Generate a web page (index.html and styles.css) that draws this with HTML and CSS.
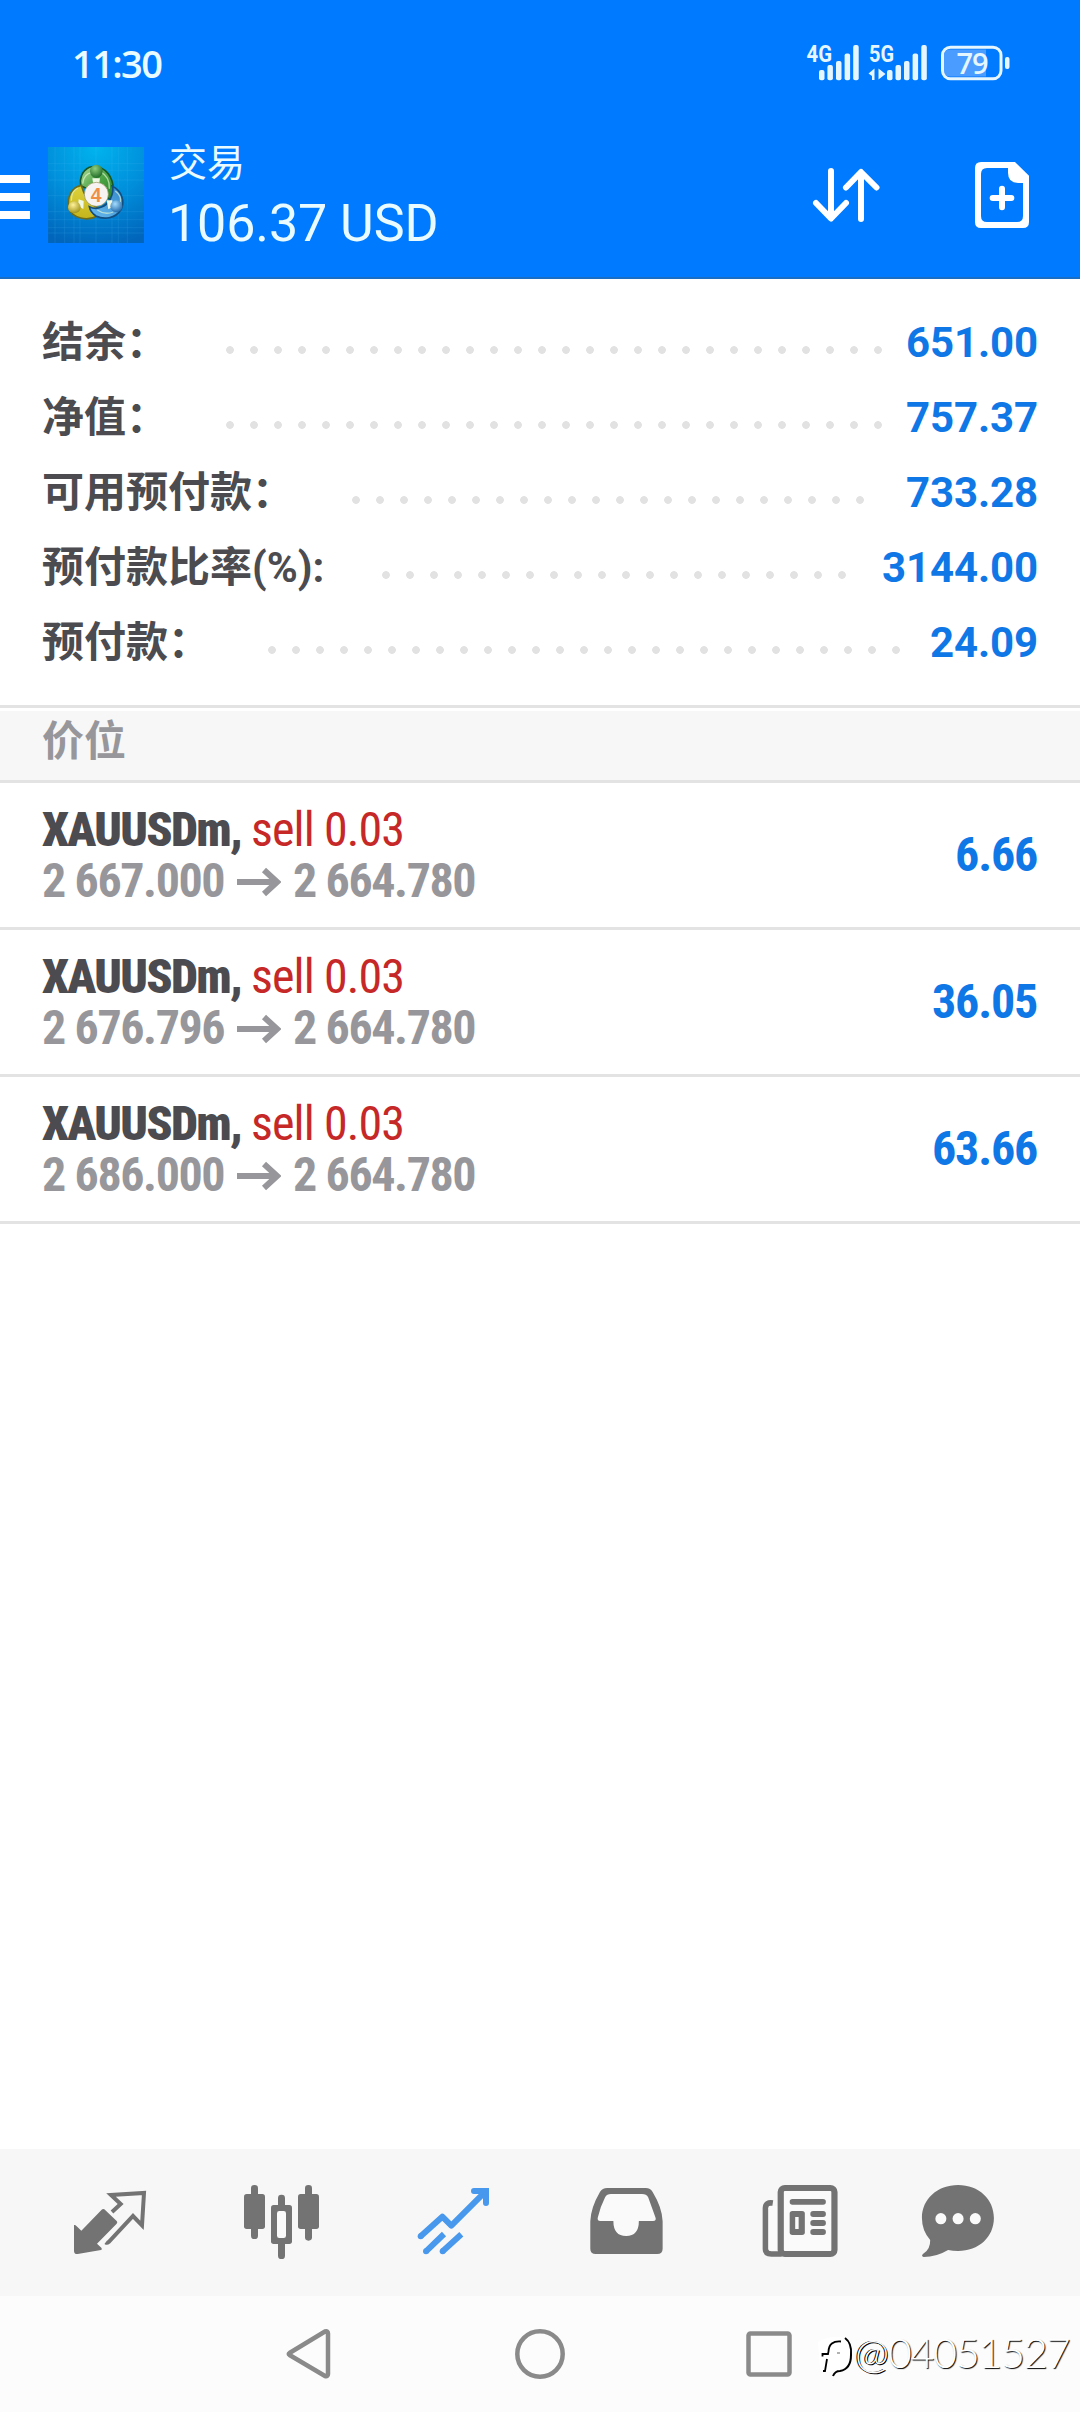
FILE: index.html
```
<!DOCTYPE html>
<html lang="zh-CN">
<head>
<meta charset="utf-8">
<title>交易</title>
<link rel="stylesheet" href="styles.css">
</head>
<body>
<div class="screen">
  <header class="top">
    <div class="status">
      <span class="clock">11:30</span>
      <svg class="status-icons" width="210" height="44" viewBox="801 41 210 44">
        <g fill="#e6f6ff">
          <text x="806.5" y="62" font-size="23" textLength="25.5" lengthAdjust="spacingAndGlyphs" class="net">4G</text>
          <rect x="819" y="70" width="5.5" height="10.3" rx="2"/><rect x="827.4" y="65" width="5.5" height="15.3" rx="2"/><rect x="836" y="61" width="5.5" height="19.3" rx="2"/><rect x="844.6" y="53.5" width="5.5" height="26.8" rx="2"/><rect x="853.2" y="45" width="5.5" height="35.3" rx="2"/>
          <text x="869" y="62" font-size="23" textLength="25" lengthAdjust="spacingAndGlyphs" class="net">5G</text>
          <path d="M868.5 73.5l6-5v11.5h-2.500v-4z"/><path d="M878.500 68.500l7 5.500-7 5.500z"/>
          <rect x="887" y="70" width="5.500" height="10.300" rx="2"/><rect x="895.500" y="65" width="5.500" height="15.300" rx="2"/><rect x="904" y="61" width="5.500" height="19.300" rx="2"/><rect x="912.600" y="53.500" width="5.500" height="26.800" rx="2"/><rect x="921.300" y="45" width="5.500" height="35.300" rx="2"/>
          <path d="M950 49.500h36v27h-36q-6 0-6-6v-15q0-6 6-6z" fill="#4a9cff"/>
          <rect x="942.500" y="47.200" width="58.500" height="31.600" rx="8" fill="none" stroke="#e6f6ff" stroke-width="3"/>
          <rect x="1005" y="57" width="4.500" height="12" rx="2"/>
          <text x="956.500" y="74" font-size="29" textLength="32" class="level">79</text>
        </g>
      </svg>
    </div>
    <div class="toolbar">
      <svg class="menu" width="30" height="44" viewBox="0 0 30 44"><path d="M0 0h30v8H0zM0 18h30v8H0zM0 36h30v8H0z" fill="#fff"/></svg>
      <svg class="logo" width="96" height="96" viewBox="54 51 288 288">
        <defs>
          <radialGradient id="sky" cx=".5" cy="0" r="1.050"><stop offset="0" stop-color="#00b4ee"/><stop offset=".5" stop-color="#0090dc"/><stop offset="1" stop-color="#0065bb"/></radialGradient>
          <linearGradient id="gr" x1="0" y1="0" x2="1" y2="1"><stop offset="0" stop-color="#b4dc9c"/><stop offset=".5" stop-color="#4ba446"/><stop offset="1" stop-color="#28802c"/></linearGradient>
          <linearGradient id="ye" x1="0" y1="0" x2="0" y2="1"><stop offset="0" stop-color="#ded23a"/><stop offset="1" stop-color="#c4b41d"/></linearGradient>
          <linearGradient id="bl" x1="1" y1="0" x2="0" y2="1"><stop offset="0" stop-color="#3387c9"/><stop offset="1" stop-color="#6abcf0"/></linearGradient>
          <radialGradient id="gh" cx=".4" cy=".3" r=".8"><stop offset="0" stop-color="#8fce7d"/><stop offset="1" stop-color="#125e1d"/></radialGradient>
          <radialGradient id="yh" cx=".4" cy=".3" r=".8"><stop offset="0" stop-color="#fff29a"/><stop offset="1" stop-color="#94870a"/></radialGradient>
          <radialGradient id="bh" cx=".4" cy=".3" r=".8"><stop offset="0" stop-color="#a4dcff"/><stop offset="1" stop-color="#135b9e"/></radialGradient>
        </defs>
        <path d="M54 51h288v288H54z" fill="url(#sky)"/>
        <path d="M75 51v288M104 51v288M132 51v288M150 51v288M198 51v288M246 51v288M265 51v288M292 51v288M54 101h288M54 121h288M54 150h288M54 197h288M54 245h288M54 269h288M54 293h288M54 309h288" stroke="#5bc7f4" stroke-opacity=".2" stroke-width="2"/>
        <path d="M178 112c-23 11-30 35-26 55l92 42c11-28 7-65-18-87-12-10-32-16-48-10z" fill="url(#gr)" stroke="#175827" stroke-width="5"/>
        <path d="M154 166c-30 6-43 34-38 69 12 30 55 40 86 23l14-19c-28-11-49-27-62-73z" fill="url(#ye)" stroke="#6b6d1d" stroke-width="5"/>
        <path d="M247 169c30 14 37 47 27 68-18 31-54 32-76 21-11-7-18-17-20-28 25 13 52-2 63-23 6-13 10-28 6-38z" fill="url(#bl)" stroke="#124e82" stroke-width="5"/>
        <path d="M158 161q2-30 29-34M210 125q30 15 28 51M124 212q0-30 20-38M202 240q22 16 48 6M256 183q20 15 15 35" fill="none" stroke="#e4f7d2" stroke-opacity=".65" stroke-width="4"/>
        <path d="M187 145h23l-3 20h-17zM146 208l15 5-1 24-16-9zM230 211h17v20l-12 7z" fill="#eef8e5"/>
        <ellipse cx="199" cy="124" rx="19" ry="20" fill="url(#gh)"/>
        <ellipse cx="133" cy="232" rx="19" ry="18" fill="url(#yh)"/>
        <ellipse cx="259" cy="229" rx="18" ry="18" fill="url(#bh)"/>
        <circle cx="199" cy="193" r="36" fill="#f7f3f3" stroke="#8e8c52" stroke-width="2"/>
        <text x="198" y="215" text-anchor="middle" class="four">4</text>
      </svg>
      <div class="heading">
        <span class="title">交易</span>
        <span class="total">106.37 USD</span>
      </div>
      <svg class="sort" width="68" height="56" viewBox="812 167 68 56"><path d="M831 171v47M816 203l15 15.500L846 203M861 219v-46M846 187.500l15-15.500 15.500 15.500" fill="none" stroke="#fff" stroke-width="6" stroke-linecap="round" stroke-linejoin="round"/></svg>
      <svg class="new" width="54" height="66" viewBox="585 426 162 198"><path d="M603 426h102l42 41v139q0 18-18 18H603q-18 0-18-18V444q0-18 18-18zm18 18q-18 0-18 18v126q0 18 18 18h90q18 0 18-18v-99h-14q-31 0-31-31v-14z" fill="#fff" fill-rule="evenodd"/><path d="M666 506v56M638 534h56" stroke="#fff" stroke-width="18" stroke-linecap="round"/></svg>
    </div>
  </header>

  <section class="summary">
    <div class="line"><span class="label">结余：</span><span class="leader"><i class="dots"></i></span><span class="value">651.00</span></div>
    <div class="line"><span class="label">净值：</span><span class="leader"><i class="dots"></i></span><span class="value">757.37</span></div>
    <div class="line"><span class="label">可用预付款：</span><span class="leader"><i class="dots"></i></span><span class="value">733.28</span></div>
    <div class="line"><span class="label">预付款比率(%):</span><span class="leader"><i class="dots"></i></span><span class="value">3144.00</span></div>
    <div class="line"><span class="label">预付款：</span><span class="leader"><i class="dots"></i></span><span class="value">24.09</span></div>
  </section>

  <h2 class="section">价位</h2>

  <ul class="positions">
    <li class="position">
      <div class="deal">
        <div class="row"><b class="symbol">XAUUSDm,</b><span class="side">sell 0.03</span></div>
        <div class="row prices"><span class="from">2 667.000</span><svg class="arrow" width="44" height="30" viewBox="0 0 44 30"><path d="M0 15h39M27 3l13 12-13 12"/></svg><span class="to">2 664.780</span></div>
      </div>
      <span class="profit">6.66</span>
    </li>
    <li class="position">
      <div class="deal">
        <div class="row"><b class="symbol">XAUUSDm,</b><span class="side">sell 0.03</span></div>
        <div class="row prices"><span class="from">2 676.796</span><svg class="arrow" width="44" height="30" viewBox="0 0 44 30"><path d="M0 15h39M27 3l13 12-13 12"/></svg><span class="to">2 664.780</span></div>
      </div>
      <span class="profit">36.05</span>
    </li>
    <li class="position">
      <div class="deal">
        <div class="row"><b class="symbol">XAUUSDm,</b><span class="side">sell 0.03</span></div>
        <div class="row prices"><span class="from">2 686.000</span><svg class="arrow" width="44" height="30" viewBox="0 0 44 30"><path d="M0 15h39M27 3l13 12-13 12"/></svg><span class="to">2 664.780</span></div>
      </div>
      <span class="profit">63.66</span>
    </li>
  </ul>

  <nav class="tabs">
    <svg class="tab" viewBox="75 57 270 441"><path d="M102 285q4-1 8 4l14 13 61-63q4-4 8-1l37 35q4 4 0 8l-59 60 13 12q4 5-1 7l-70 12q-11 1-11-10z" fill="#737373"/><path d="M216 246l26-24-29-27 99-6-6 97-27-28-73 78q-5 4-9 1" fill="none" stroke="#737373" stroke-width="12"/></svg>
    <svg class="tab" viewBox="588 57 270 441"><g fill="#737373"><rect x="612" y="192" width="63" height="105" rx="8"/><rect x="633" y="165" width="21" height="162" rx="10"/><rect x="774" y="192" width="63" height="105" rx="8"/><rect x="795" y="165" width="21" height="167" rx="10"/><rect x="693" y="225" width="63" height="117" rx="8"/><rect x="714" y="194" width="21" height="193" rx="10"/></g><rect x="711" y="243" width="27" height="81" rx="7" fill="#fafafa"/></svg>
    <svg class="tab" viewBox="1104 57 270 441"><g fill="none" stroke="#4898ee" stroke-width="18"><path d="M1142 319l65-59 27 27 102-102M1158 364l54-52M1208 364l56-51" stroke-linejoin="round"/><path d="M1302 183h36v36" stroke-linecap="round"/></g><g fill="#4898ee"><circle cx="1142" cy="319" r="9"/><circle cx="1158" cy="364" r="9"/><circle cx="1208" cy="364" r="9"/></g></svg>
    <svg class="tab" viewBox="119 57 261.300 441" preserveAspectRatio="none"><path d="M195 174h112q14 0 20 12 28 48 29 88v82q0 16-16 16H162q-16 0-16-16v-82q1-40 28-88 7-12 21-12z" fill="#737373"/><path d="M206 192h90q13 0 18 10l21 60q4 11-7 11h-41q0 45-37 45t-37-45h-38q-10 0-7-11 8-34 21-60 5-10 17-10z" fill="#fafafa"/></svg>
    <svg class="tab" viewBox="621.400 57 261.300 441" preserveAspectRatio="none"><path d="M676 219q-21-3-21 15v123q0 15 17 15h30" fill="none" stroke="#737373" stroke-width="17"/><rect x="663" y="228" width="28" height="135" rx="7" fill="#fafafa"/><rect x="699" y="174" width="156" height="198" rx="12" fill="#fafafa" stroke="#737373" stroke-width="18"/><g fill="#737373"><rect x="725" y="207" width="105" height="17" rx="8"/><rect x="785" y="243" width="45" height="18" rx="8"/><rect x="785" y="270" width="45" height="18" rx="8"/><rect x="785" y="297" width="45" height="18" rx="8"/><rect x="725" y="243" width="44" height="72" rx="8"/></g><rect x="741" y="261" width="10" height="36" fill="#fafafa"/></svg>
    <svg class="tab" viewBox="1080.200 57 261.300 441" preserveAspectRatio="none"><path d="M1214 165c60 0 104 42 104 99s-44 99-104 99q-15 0-29-3-34 21-71 21-8-3-2-9 22-13 21-42-24-28-24-66c0-57 45-99 105-99z" fill="#737373"/><g fill="#fafafa"><ellipse cx="1164" cy="266" rx="16" ry="17"/><ellipse cx="1214" cy="266" rx="16" ry="17"/><ellipse cx="1264" cy="266" rx="16" ry="17"/></g></svg>
  </nav>

  <footer class="system">
    <svg class="keys" width="560" height="60" viewBox="260 2324 560 60"><g fill="none" stroke="#8a8a8a" stroke-width="4.500" stroke-linejoin="round"><path d="M289.500 2353l35.500-21.500q3-1 3 2v40.500q0 3-3 2l-35.500-21q-1.500-1 0-2z"/><circle cx="540" cy="2354" r="22.700"/><rect x="748.500" y="2333.500" width="41" height="41" rx="2"/></g></svg>
    <div class="watermark">
      <svg width="46" height="48" viewBox="810 2330 46 48" fill="none"><path d="M818 2342q10-6 24-5 8 5 8 18 0 14-14 16-12 3-16-2z" fill="#fff"/><path d="M845 2338q7 5 6 17 0 14-11 16-5 0-7 5" stroke="#000" stroke-width="2"/><path d="M841 2341.500q-12-1-12.500 10l-.5 2.500h-5.500v2.500M827 2359l-2 12h-2" stroke="#000" stroke-width="1.800"/><path d="M837 2353h3" stroke="#999" stroke-width="1.500"/></svg>
      <span class="handle"><span class="at">@</span>04051527</span>
    </div>
  </footer>
</div>
</body>
</html>
```
FILE: styles.css
```
* { box-sizing: border-box; }
body { margin: 0; background: #fff; font-family: Roboto, "Noto Sans CJK SC", sans-serif; }
.screen { width: 1080px; height: 2412px; display: flex; flex-direction: column; overflow: hidden; }

.top { height: 279px; background: #007aff; border-bottom: 2px solid #1a6fc4; color: #e9fbff; }
.status { height: 130px; display: flex; justify-content: space-between; padding: 41px 69px 0 72px; }
.clock { font: 650 38px/44px "Open Sans", sans-serif; letter-spacing: -1.6px; }
.net { font-family: Roboto, sans-serif; font-weight: 700; }
.level { font-family: "Open Sans", sans-serif; font-weight: 600; }
.toolbar { height: 130px; display: flex; align-items: center; }
.menu { margin-right: 18px; margin-top: 4px; }
.logo { margin-right: 25px; }
.four { font: 700 58px "Liberation Sans", sans-serif; fill: #ef8f45; }
.heading { display: flex; flex-direction: column; flex: 1; padding-top: 3px; }
.title { font-size: 38px; line-height: 54px; }
.total { margin-left: -1px; font-size: 52px; line-height: 68px; letter-spacing: -.1px; }
.sort { margin-right: 95px; }
.new { margin-right: 51px; }

.summary { height: 429px; padding: 26px 42px 0; border-bottom: 3px solid #e3e3e3; }
.line { height: 75px; display: flex; align-items: center; font-size: 42px; font-weight: 700; line-height: 75px; }
.label { color: #4b4b50; white-space: nowrap; }
.leader { flex: 1; margin: 15px 5px 0 58px; }
.dots { display: block; height: 8px; width: round(down, 100%, 24px); background: radial-gradient(circle at 4px 4px, #e2e2e2 3.5px, transparent 4.2px) 0 0 / 24px 8px; }
.value { color: #0f78e6; letter-spacing: -.1px; }

.section { margin: 3px 0 0; height: 72px; padding-left: 42px; background: #f7f7f7; border-bottom: 3px solid #e3e3e3; color: #97979b; font-size: 42px; line-height: 62px; }

.positions { list-style: none; margin: 0; padding: 0; flex: 1; }
.position { height: 147px; padding: 20px 42px 0; border-bottom: 3px solid #e3e3e3; display: flex; justify-content: space-between; font-family: "Roboto Condensed", Roboto, sans-serif; font-stretch: 75%; font-size: 48px; font-weight: 700; letter-spacing: -1.2px; }
.row { display: flex; height: 51px; line-height: 54px; white-space: pre; }
.symbol { width: 209px; color: #4b4b50; letter-spacing: -1.7px; }
.side { color: #c62828; font-weight: 400; letter-spacing: -.9px; }
.prices { color: #97979b; letter-spacing: -1.4px; }
.from { width: 195px; }
.to { margin-left: 12px; }
.arrow { margin-top: 13px; fill: none; stroke: #97979b; stroke-width: 6; }
.profit { color: #0f78e6; line-height: 103px; margin-right: 1px; }

.tabs { height: 147px; background: #f7f7f7; padding-left: 65px; display: grid; grid-template-columns: 171px 172px 173px 173px 158px 90px; }
.tab { width: 90px; height: 147px; }

.system { height: 116px; background: #fcfcfc; display: flex; align-items: center; padding-left: 260px; }
.keys { flex: none; }
.watermark { display: flex; align-items: center; margin-left: -10px; }
.handle { margin: -3px 0 0 -1px; font: 300 41px/50px Lato, sans-serif; letter-spacing: -1.1px; color: #fff; text-shadow: 1px 1px 1px #000; }
.at { text-shadow: 1px 1px 0 #000, -1px 0 0 #000; }
```
